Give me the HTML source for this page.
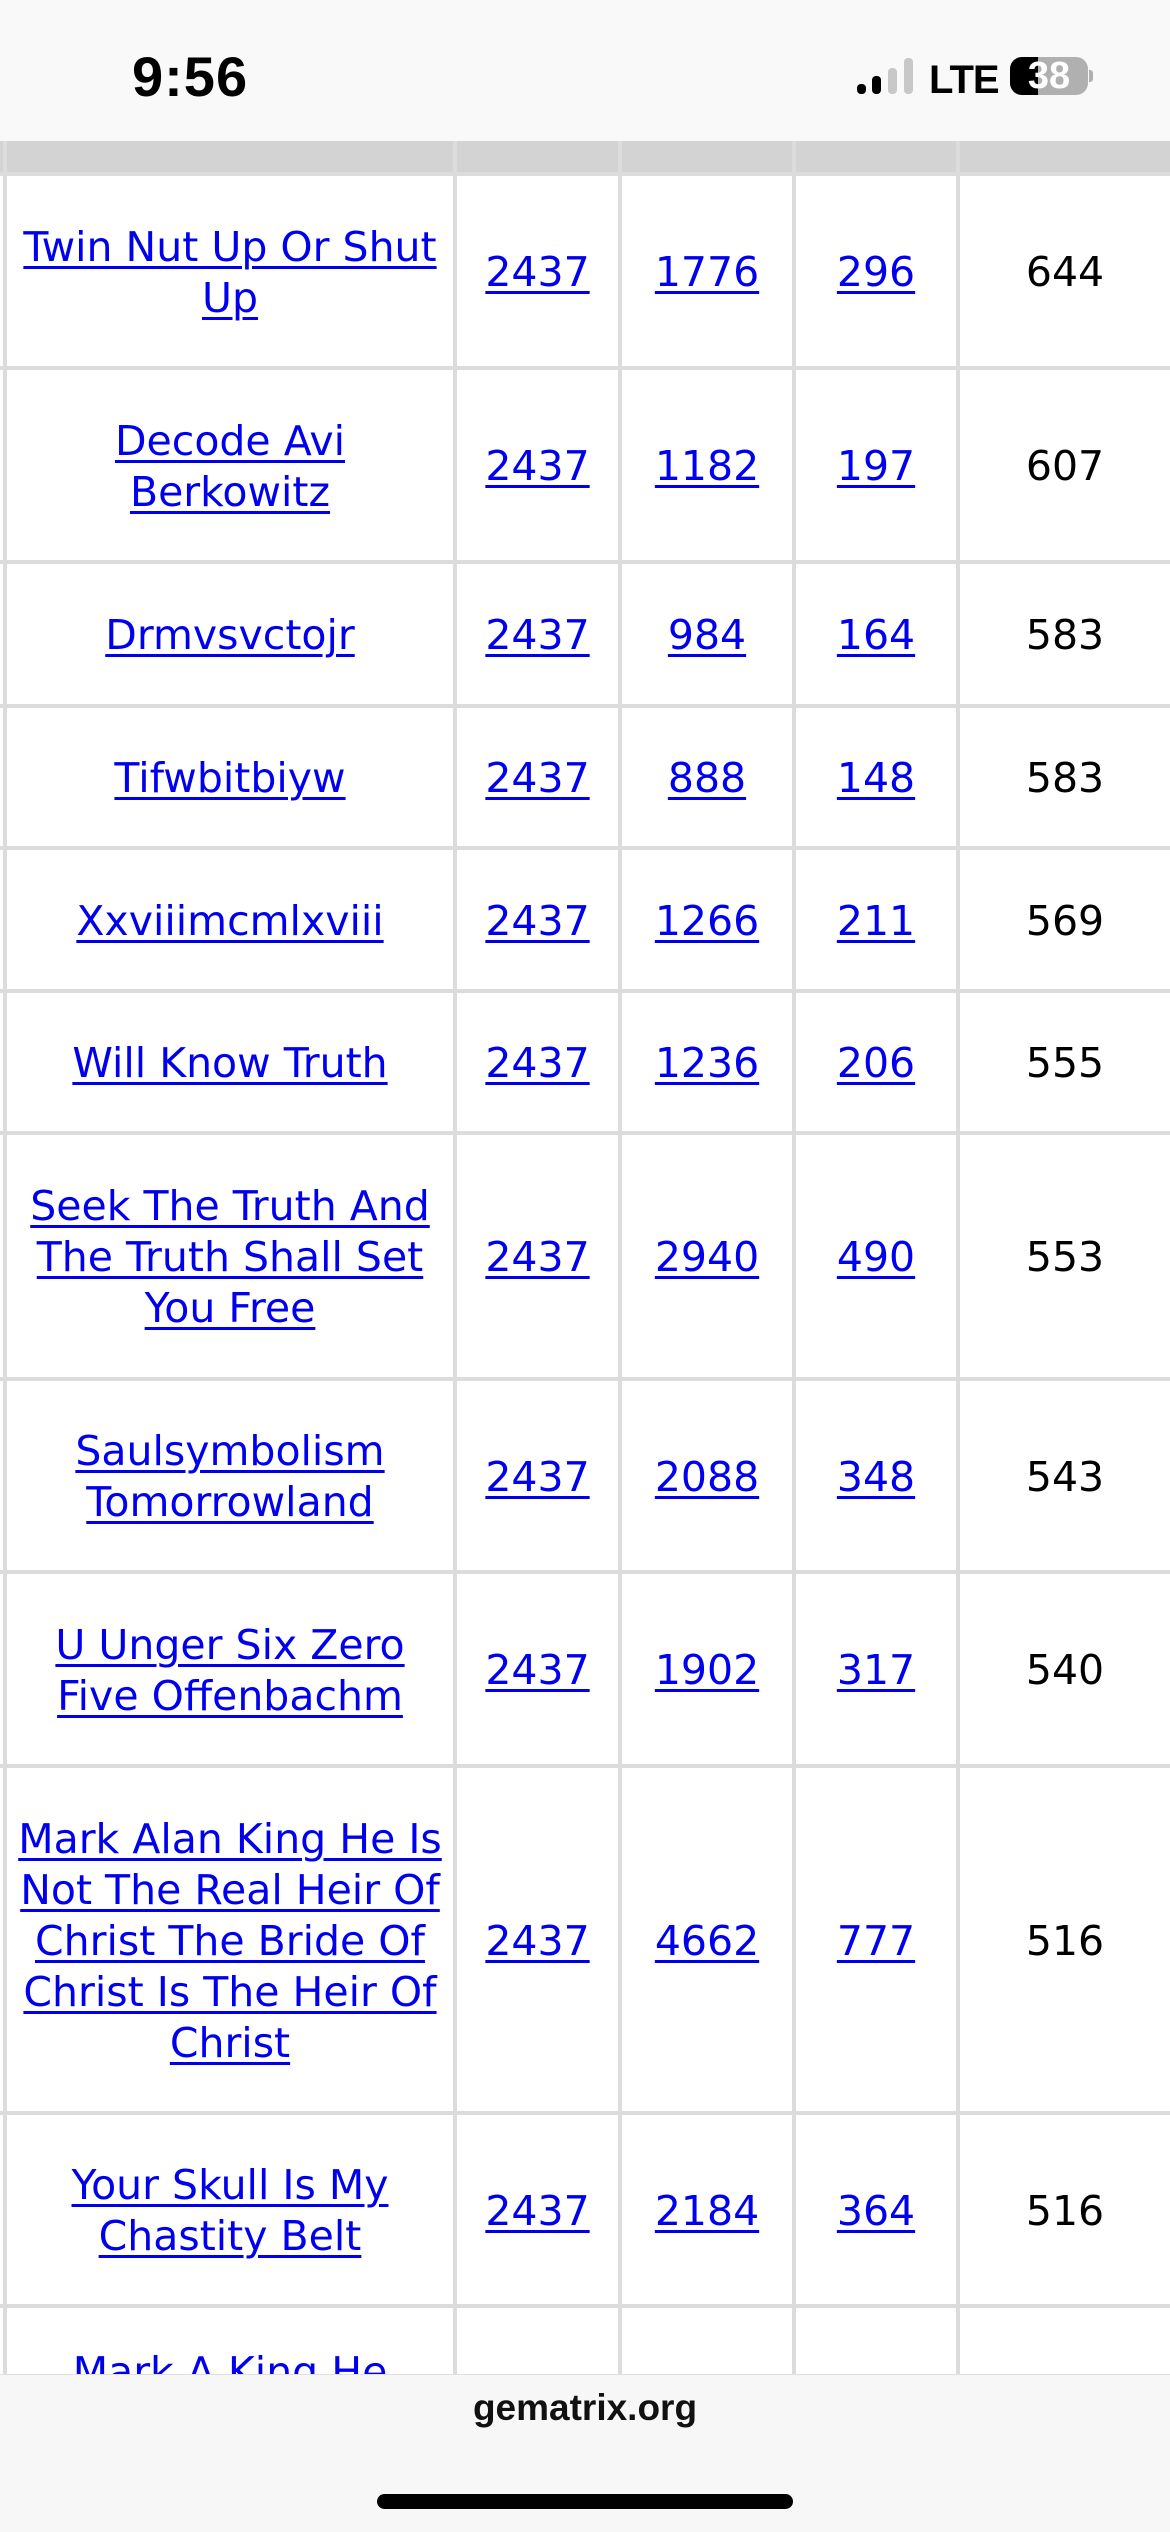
<!DOCTYPE html>
<html><head><meta charset="utf-8">
<style>
*{margin:0;padding:0;box-sizing:border-box}
body{width:1170px;height:2532px;position:relative;overflow:hidden;background:#fff;font-family:"DejaVu Sans","Liberation Sans",sans-serif}
.sb{position:absolute;left:0;top:0;width:1170px;height:141px;background:#f9f9f9}
.time{position:absolute;left:132px;top:44px;font:bold 56px "Liberation Sans",sans-serif;color:#000;letter-spacing:1px}
.bar{position:absolute;width:9px;border-radius:4px;bottom:0}
.hl{position:absolute;left:0;width:1170px;height:4px;background:#dcdcdc}
.vl{position:absolute;top:141px;width:4px;height:2240px;background:#dcdcdc}
.c{position:absolute;display:flex;align-items:center;justify-content:center;text-align:center;font-size:41px;line-height:51px;color:#000;padding-top:3px}
.c a{color:#0000ee;text-decoration:underline;text-decoration-thickness:3px;text-underline-offset:5px}
.bot{position:absolute;left:0;top:2374px;width:1170px;height:158px;background:#f7f7f7;border-top:1px solid #e0e0e0}
</style></head><body>
<div class="sb">
 <div class="time">9:56</div>
 <div style="position:absolute;left:857px;top:58px;width:60px;height:36px">
  <div class="bar" style="left:0;height:10px;background:#000"></div>
  <div class="bar" style="left:15px;height:18px;background:#000"></div>
  <div class="bar" style="left:31px;height:26px;background:#c8c8c8"></div>
  <div class="bar" style="left:47px;height:36px;background:#c8c8c8"></div>
 </div>
 <div style="position:absolute;left:929px;top:58px;font:bold 40px 'Liberation Sans',sans-serif;letter-spacing:-1px">LTE</div>
 <div style="position:absolute;left:1010px;top:57px;width:78px;height:38px;border-radius:12px;background:#b0b0b0;overflow:hidden">
  <div style="position:absolute;left:0;top:0;width:28px;height:38px;background:#000"></div>
  <div style="position:absolute;left:0;top:0;width:78px;text-align:center;font:bold 38px/38px 'Liberation Sans',sans-serif;color:#fff">38</div>
 </div>
 <div style="position:absolute;left:1089px;top:70px;width:4px;height:12px;border-radius:0 3px 3px 0;background:#b0b0b0"></div>
</div>
<div style="position:absolute;left:0;top:141px;width:1170px;height:31px;background:#d3d3d3"></div>
<div class="hl" style="top:172px;height:4px"></div>
<div class="vl" style="left:3px"></div>
<div class="vl" style="left:453px"></div>
<div class="vl" style="left:618px"></div>
<div class="vl" style="left:792px"></div>
<div class="vl" style="left:956px"></div>
<div class="hl" style="top:366px"></div>
<div class="hl" style="top:560px"></div>
<div class="hl" style="top:704px"></div>
<div class="hl" style="top:846px"></div>
<div class="hl" style="top:989px"></div>
<div class="hl" style="top:1131px"></div>
<div class="hl" style="top:1377px"></div>
<div class="hl" style="top:1570px"></div>
<div class="hl" style="top:1764px"></div>
<div class="hl" style="top:2111px"></div>
<div class="hl" style="top:2304px"></div>

<div style="position:absolute;left:0;top:176px;width:1170px;height:190px">
 <div class="c" style="left:7px;width:446px;height:100%"><a>Twin Nut Up Or Shut<br>Up</a></div>
 <div class="c" style="left:457px;width:161px;height:100%"><a>2437</a></div>
 <div class="c" style="left:622px;width:170px;height:100%"><a>1776</a></div>
 <div class="c" style="left:796px;width:160px;height:100%"><a>296</a></div>
 <div class="c" style="left:960px;width:210px;height:100%">644</div>
</div>
<div style="position:absolute;left:0;top:370px;width:1170px;height:190px">
 <div class="c" style="left:7px;width:446px;height:100%"><a>Decode Avi<br>Berkowitz</a></div>
 <div class="c" style="left:457px;width:161px;height:100%"><a>2437</a></div>
 <div class="c" style="left:622px;width:170px;height:100%"><a>1182</a></div>
 <div class="c" style="left:796px;width:160px;height:100%"><a>197</a></div>
 <div class="c" style="left:960px;width:210px;height:100%">607</div>
</div>
<div style="position:absolute;left:0;top:564px;width:1170px;height:140px">
 <div class="c" style="left:7px;width:446px;height:100%"><a>Drmvsvctojr</a></div>
 <div class="c" style="left:457px;width:161px;height:100%"><a>2437</a></div>
 <div class="c" style="left:622px;width:170px;height:100%"><a>984</a></div>
 <div class="c" style="left:796px;width:160px;height:100%"><a>164</a></div>
 <div class="c" style="left:960px;width:210px;height:100%">583</div>
</div>
<div style="position:absolute;left:0;top:708px;width:1170px;height:138px">
 <div class="c" style="left:7px;width:446px;height:100%"><a>Tifwbitbiyw</a></div>
 <div class="c" style="left:457px;width:161px;height:100%"><a>2437</a></div>
 <div class="c" style="left:622px;width:170px;height:100%"><a>888</a></div>
 <div class="c" style="left:796px;width:160px;height:100%"><a>148</a></div>
 <div class="c" style="left:960px;width:210px;height:100%">583</div>
</div>
<div style="position:absolute;left:0;top:850px;width:1170px;height:139px">
 <div class="c" style="left:7px;width:446px;height:100%"><a>Xxviiimcmlxviii</a></div>
 <div class="c" style="left:457px;width:161px;height:100%"><a>2437</a></div>
 <div class="c" style="left:622px;width:170px;height:100%"><a>1266</a></div>
 <div class="c" style="left:796px;width:160px;height:100%"><a>211</a></div>
 <div class="c" style="left:960px;width:210px;height:100%">569</div>
</div>
<div style="position:absolute;left:0;top:993px;width:1170px;height:138px">
 <div class="c" style="left:7px;width:446px;height:100%"><a>Will Know Truth</a></div>
 <div class="c" style="left:457px;width:161px;height:100%"><a>2437</a></div>
 <div class="c" style="left:622px;width:170px;height:100%"><a>1236</a></div>
 <div class="c" style="left:796px;width:160px;height:100%"><a>206</a></div>
 <div class="c" style="left:960px;width:210px;height:100%">555</div>
</div>
<div style="position:absolute;left:0;top:1135px;width:1170px;height:242px">
 <div class="c" style="left:7px;width:446px;height:100%"><a>Seek The Truth And<br>The Truth Shall Set<br>You Free</a></div>
 <div class="c" style="left:457px;width:161px;height:100%"><a>2437</a></div>
 <div class="c" style="left:622px;width:170px;height:100%"><a>2940</a></div>
 <div class="c" style="left:796px;width:160px;height:100%"><a>490</a></div>
 <div class="c" style="left:960px;width:210px;height:100%">553</div>
</div>
<div style="position:absolute;left:0;top:1381px;width:1170px;height:189px">
 <div class="c" style="left:7px;width:446px;height:100%"><a>Saulsymbolism<br>Tomorrowland</a></div>
 <div class="c" style="left:457px;width:161px;height:100%"><a>2437</a></div>
 <div class="c" style="left:622px;width:170px;height:100%"><a>2088</a></div>
 <div class="c" style="left:796px;width:160px;height:100%"><a>348</a></div>
 <div class="c" style="left:960px;width:210px;height:100%">543</div>
</div>
<div style="position:absolute;left:0;top:1574px;width:1170px;height:190px">
 <div class="c" style="left:7px;width:446px;height:100%"><a>U Unger Six Zero<br>Five Offenbachm</a></div>
 <div class="c" style="left:457px;width:161px;height:100%"><a>2437</a></div>
 <div class="c" style="left:622px;width:170px;height:100%"><a>1902</a></div>
 <div class="c" style="left:796px;width:160px;height:100%"><a>317</a></div>
 <div class="c" style="left:960px;width:210px;height:100%">540</div>
</div>
<div style="position:absolute;left:0;top:1768px;width:1170px;height:343px">
 <div class="c" style="left:7px;width:446px;height:100%"><a>Mark Alan King He Is<br>Not The Real Heir Of<br>Christ The Bride Of<br>Christ Is The Heir Of<br>Christ</a></div>
 <div class="c" style="left:457px;width:161px;height:100%"><a>2437</a></div>
 <div class="c" style="left:622px;width:170px;height:100%"><a>4662</a></div>
 <div class="c" style="left:796px;width:160px;height:100%"><a>777</a></div>
 <div class="c" style="left:960px;width:210px;height:100%">516</div>
</div>
<div style="position:absolute;left:0;top:2115px;width:1170px;height:189px">
 <div class="c" style="left:7px;width:446px;height:100%"><a>Your Skull Is My<br>Chastity Belt</a></div>
 <div class="c" style="left:457px;width:161px;height:100%"><a>2437</a></div>
 <div class="c" style="left:622px;width:170px;height:100%"><a>2184</a></div>
 <div class="c" style="left:796px;width:160px;height:100%"><a>364</a></div>
 <div class="c" style="left:960px;width:210px;height:100%">516</div>
</div>
<div class="c" style="left:7px;width:446px;top:2345px;height:51px"><a>Mark A King He</a></div>

<div class="bot">
 <div style="position:absolute;left:0;top:12px;width:1170px;text-align:center;font:bold 37px 'Liberation Sans',sans-serif;color:#111">gematrix.org</div>
 <div style="position:absolute;left:377px;top:119px;width:416px;height:15px;border-radius:8px;background:#000"></div>
</div>
</body></html>
